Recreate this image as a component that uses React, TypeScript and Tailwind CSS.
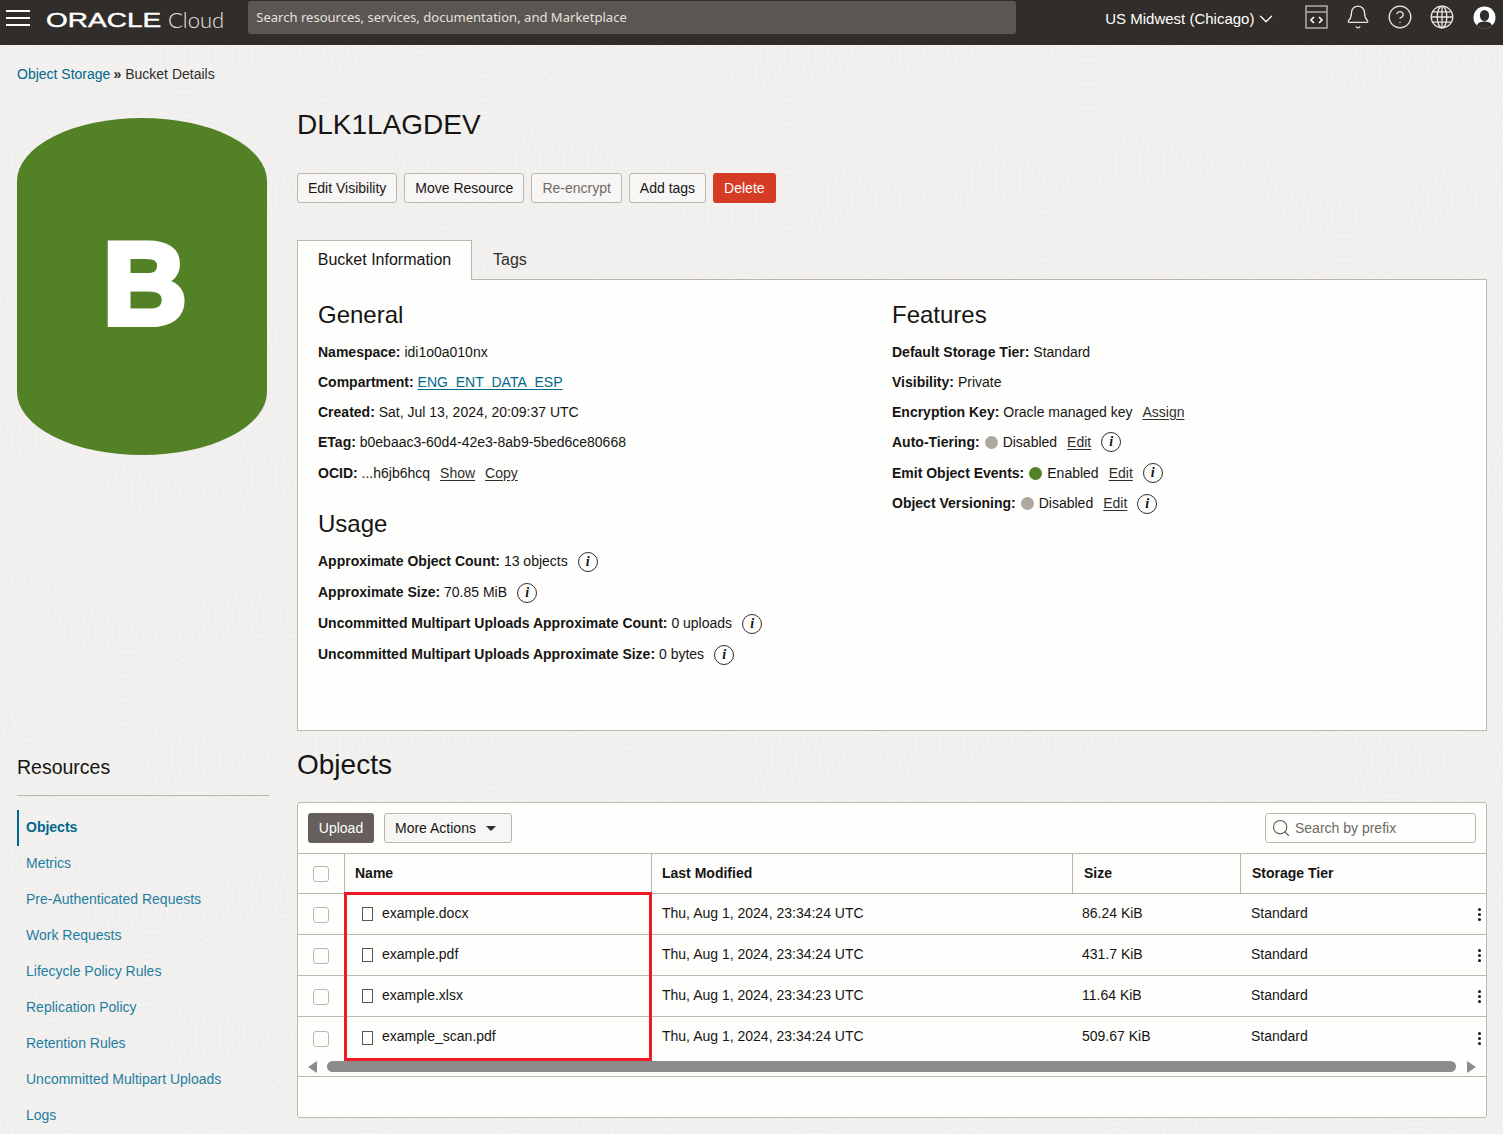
import React from "react";
import { Bell, ChevronDown, CircleHelp, Search } from "lucide-react";

const Info = () => (
  <span className="ml-[10px] inline-flex h-[20px] w-[20px] shrink-0 items-center justify-center rounded-full border-[1.5px] border-[#312d2a] font-['Liberation_Serif',serif] text-[14px] font-bold italic leading-none text-[#161513]">
    i
  </span>
);

const Dot = ({ green }: { green?: boolean }) => (
  <span className={green ? "mx-[5px] h-[13px] w-[13px] shrink-0 rounded-full bg-[#528225]" : "mx-[5px] h-[13px] w-[13px] shrink-0 rounded-full bg-[#aea8a3]"} />
);

const Row = ({ children, h, className }: { children: React.ReactNode; h?: boolean; className?: string }) => (
  <div className={(h ? "flex h-[31px] items-center whitespace-pre " : "flex h-[30px] items-center whitespace-pre ") + (className || "")}>{children}</div>
);

const Lnk = ({ children, className }: { children: React.ReactNode; className?: string }) => (
  <span className={"underline underline-offset-2 " + (className || "text-[#312d2a]")}>{children}</span>
);

const Btn = ({ children, muted }: { children: React.ReactNode; muted?: boolean }) => (
  <button className={muted ? "h-[30px] rounded-[3px] border border-[#bcb6b1] bg-[#f7f6f5] px-[10px] text-[14px] text-[#6f6964]" : "h-[30px] rounded-[3px] border border-[#bcb6b1] bg-[#f7f6f5] px-[10px] text-[14px] text-[#161513]"}>
    {children}
  </button>
);

const Check = () => <span className="block h-[16px] w-[16px] rounded-[3px] border border-[#bcb6b1] bg-[#fefefc]" />;

const FileIcon = () => <span className="block h-[14px] w-[11px] border-[1.5px] border-[#5b5652] bg-[#fefefc]" />;

const Kebab = () => (
  <span className="flex flex-col gap-[2px]">
    <span className="h-[3px] w-[3px] rounded-full bg-[#161513]" />
    <span className="h-[3px] w-[3px] rounded-full bg-[#161513]" />
    <span className="h-[3px] w-[3px] rounded-full bg-[#161513]" />
  </span>
);

const files = [
  ["example.docx", "Thu, Aug 1, 2024, 23:34:24 UTC", "86.24 KiB"],
  ["example.pdf", "Thu, Aug 1, 2024, 23:34:24 UTC", "431.7 KiB"],
  ["example.xlsx", "Thu, Aug 1, 2024, 23:34:23 UTC", "11.64 KiB"],
  ["example_scan.pdf", "Thu, Aug 1, 2024, 23:34:24 UTC", "509.67 KiB"],
];

const nav = ["Metrics", "Pre-Authenticated Requests", "Work Requests", "Lifecycle Policy Rules", "Replication Policy", "Retention Rules", "Uncommitted Multipart Uploads", "Logs"];

const swirls: number[][] = [];
for (let j = 0; j < 9; j++) {
  for (let i = 0; i < 11; i++) {
    swirls.push([i * 150 + ((j * 67) % 110) - 30, j * 140 + ((i * 53) % 70) + 20]);
  }
}
const radii = [124, 118, 112, 106, 100, 94, 88, 82, 76, 70, 64, 58, 52, 46, 40, 34, 28, 22, 16, 10, 4];

const Pattern = () => (
  <svg className="pointer-events-none absolute left-0 top-0 h-[1134px] w-[1503px]" viewBox="0 0 1503 1134">
    {swirls.map(([x, y], i) => (
      <g key={i} stroke="#efeeec" strokeWidth="1.6" fill="#f2f1ef">
        {radii.map((r) => (
          <circle key={r} cx={x} cy={y} r={r} />
        ))}
      </g>
    ))}
  </svg>
);

export default function App() {
  return (
    <div className="relative h-[1134px] w-[1503px] overflow-hidden bg-[#f2f1ef] font-['Liberation_Sans',Arial,sans-serif] text-[14px] text-[#161513]">
      <Pattern />
      <header className="relative flex h-[45px] items-start bg-[#312d2a] text-white">
        <div className="ml-[6px] mt-[10px] flex w-[24px] flex-col gap-[5px]">
          <span className="h-[2px] bg-white" />
          <span className="h-[2px] bg-white" />
          <span className="h-[2px] bg-white" />
        </div>
        <div className="ml-[16px] mt-[6px] flex h-[28px] w-[114px] items-center">
          <span className="inline-block origin-left scale-x-[1.4] text-[20px] font-normal leading-none [-webkit-text-stroke:0.4px_white]">ORACLE</span>
        </div>
        <span className="ml-[8px] mt-[6px] font-['Lato',sans-serif] text-[22px] font-light leading-[28px] text-[#e8e5e2]">Cloud</span>
        <div className="ml-[24px] mt-[1px] flex h-[33px] w-[768px] items-center rounded-[3px] bg-[#5b5652] px-[8px] pt-[1px] font-['Noto_Sans',sans-serif] text-[13.05px] text-[#e4e1de]">
          Search resources, services, documentation, and Marketplace
        </div>
        <div className="ml-[89px] mt-[8px] flex items-center text-[15px] leading-[18px]">
          US Midwest (Chicago)
          <ChevronDown className="ml-[1px] h-[22px] w-[22px]" strokeWidth={1.4} />
        </div>
        <div className="ml-[26px] mt-[4px] flex items-center gap-[16px] text-[#e8e5e2]">
          <span className="flex w-[26px] justify-center">
            <svg width="23" height="24" viewBox="0 0 23 24" fill="none" stroke="#a9a5a1" strokeWidth="1.6">
              <rect x="1" y="1" width="21" height="22" />
              <path d="M1 7h21" />
              <path d="M9 12l-3 3 3 3M14 12l3 3-3 3" stroke="#fff" />
            </svg>
          </span>
          <Bell className="h-[26px] w-[26px]" strokeWidth={1.2} />
          <CircleHelp className="h-[26px] w-[26px]" strokeWidth={1.2} />
          <svg width="26" height="26" viewBox="0 0 26 26" fill="none" stroke="currentColor" strokeWidth="1.3">
            <circle cx="13" cy="13" r="10.8" />
            <ellipse cx="13" cy="13" rx="4.8" ry="10.8" />
            <path d="M2.2 13h21.6M3.6 7.8h18.8M3.6 18.2h18.8M13 2.2v21.6" />
          </svg>
          <span className="flex w-[26px] justify-center">
            <svg width="23" height="23" viewBox="0 0 23 23">
              <circle cx="11.5" cy="11.5" r="11" fill="#fff" />
              <ellipse cx="11.5" cy="9.5" rx="4.6" ry="5.6" fill="#312d2a" />
              <path d="M3.8 19.5c1.5-3.2 4.5-4 7.7-4s6.2.8 7.7 4a11 11 0 0 1-15.4 0z" fill="#312d2a" />
            </svg>
          </span>
        </div>
      </header>

      <main className="relative px-[17px]">
        <div className="flex h-[57px] items-center pt-[2px] text-[14px]">
          <span className="text-[#00688c]">Object Storage</span>
          <span className="ml-[3px] mr-[4px] font-bold text-[#312d2a]">»</span>
          <span className="text-[#312d2a]">Bucket Details</span>
        </div>

        <div className="flex h-[629px] gap-[28px]">
          <div className="w-[252px] shrink-0 pt-[16px]">
            <div className="flex h-[337px] w-[250px] items-center justify-center rounded-[125px/63px] bg-[#528225] pb-[6px] pl-[6px] text-[116px] font-bold leading-none text-white [-webkit-text-stroke:6px_white]">
              B
            </div>
          </div>

          <div className="w-[1190px] shrink-0">
            <h1 className="h-[71px] pt-[5px] text-[28px] font-normal leading-[36px]">DLK1LAGDEV</h1>
            <div className="flex gap-[7px]">
              <Btn>Edit Visibility</Btn>
              <Btn>Move Resource</Btn>
              <Btn muted>Re-encrypt</Btn>
              <Btn>Add tags</Btn>
              <button className="h-[30px] rounded-[3px] bg-[#d63b25] px-[11px] text-[14px] text-white">Delete</button>
            </div>

            <div className="relative z-10 mt-[37px] flex h-[40px] items-center">
              <div className="flex h-[40px] w-[175px] items-center justify-center border border-b-0 border-[#bcb6b1] bg-[#fefefc] pb-[2px] text-[16px]">Bucket Information</div>
              <div className="ml-[21px] text-[16px] text-[#312d2a]">Tags</div>
            </div>
            <div className="-mt-px flex h-[452px] border border-[#bcb6b1] bg-[#fefefc]">
              <div className="w-[594px] shrink-0 pl-[20px] pt-[18px]">
                <h2 className="mb-[5px] text-[24px] font-normal leading-[34px]">General</h2>
                <Row><b>Namespace: </b>idi1o0a010nx</Row>
                <Row><b>Compartment: </b><Lnk className="text-[#00688c]">ENG_ENT_DATA_ESP</Lnk></Row>
                <Row><b>Created: </b>Sat, Jul 13, 2024, 20:09:37 UTC</Row>
                <Row><b>ETag: </b>b0ebaac3-60d4-42e3-8ab9-5bed6ce80668</Row>
                <Row h className="mt-[1px]"><b>OCID: </b>...h6jb6hcq<span className="w-[10px]" /><Lnk>Show</Lnk><span className="w-[10px]" /><Lnk>Copy</Lnk></Row>
                <h2 className="mb-[5px] mt-[18px] text-[24px] font-normal leading-[34px]">Usage</h2>
                <Row h><b>Approximate Object Count: </b>13 objects<Info /></Row>
                <Row h><b>Approximate Size: </b>70.85 MiB<Info /></Row>
                <Row h><b>Uncommitted Multipart Uploads Approximate Count: </b>0 uploads<Info /></Row>
                <Row h><b>Uncommitted Multipart Uploads Approximate Size: </b>0 bytes<Info /></Row>
              </div>
              <div className="pt-[18px]">
                <h2 className="mb-[5px] text-[24px] font-normal leading-[34px]">Features</h2>
                <Row><b>Default Storage Tier: </b>Standard</Row>
                <Row><b>Visibility: </b>Private</Row>
                <Row><b>Encryption Key: </b>Oracle managed key<span className="w-[10px]" /><Lnk>Assign</Lnk></Row>
                <Row><b>Auto-Tiering:</b><Dot />Disabled<span className="w-[10px]" /><Lnk>Edit</Lnk><Info /></Row>
                <Row h className="pt-[1px]"><b>Emit Object Events:</b><Dot green />Enabled<span className="w-[10px]" /><Lnk>Edit</Lnk><Info /></Row>
                <Row h><b>Object Versioning:</b><Dot />Disabled<span className="w-[10px]" /><Lnk>Edit</Lnk><Info /></Row>
              </div>
            </div>
          </div>
        </div>

        <div className="flex gap-[28px]">
          <div className="w-[252px] shrink-0">
            <h3 className="flex h-[65px] items-end border-b border-[#bcb6b1] pb-[16px] text-[19.5px] font-normal leading-[24px]">Resources</h3>
            <nav className="mt-[14px]">
              <div className="flex h-[36px] items-center border-l-2 border-[#00688c] pb-[2px] pl-[7px] font-bold text-[#00688c]">Objects</div>
              {nav.map((n) => (
                <div key={n} className="flex h-[36px] items-center pb-[2px] pl-[9px] text-[#1f7da0]">{n}</div>
              ))}
            </nav>
          </div>

          <div className="w-[1190px] shrink-0">
            <h2 className="flex h-[71px] items-start pt-[15px] text-[28px] font-normal leading-[38px]">Objects</h2>
            <div className="relative h-[316px] rounded-[3px] border border-[#bcb6b1] bg-[#fefefc]">
              <div className="flex h-[50px] items-center px-[10px]">
                <button className="h-[30px] w-[66px] rounded-[3px] bg-[#665f5b] text-[14px] text-white">Upload</button>
                <button className="ml-[10px] flex h-[30px] w-[128px] items-center rounded-[3px] border border-[#bcb6b1] bg-[#f7f6f5] pl-[10px] text-[14px]">
                  More Actions
                  <span className="ml-[10px] h-0 w-0 border-x-[5px] border-t-[5px] border-x-transparent border-t-[#312d2a]" />
                </button>
                <div className="ml-auto flex h-[30px] w-[211px] items-center rounded-[3px] border border-[#bcb6b1] bg-[#fefefc] pl-[5px] text-[#6f6964]">
                  <Search className="h-[20px] w-[20px] text-[#5b5652]" strokeWidth={1.3} />
                  <span className="ml-[4px]">Search by prefix</span>
                </div>
              </div>

              <div className="grid h-[41px] grid-cols-[46px_307px_421px_168px_1fr] items-stretch border-y border-[#bcb6b1] font-bold">
                <div className="flex items-center pl-[15px]"><Check /></div>
                <div className="flex items-center border-l border-[#bcb6b1] pl-[10px]">Name</div>
                <div className="flex items-center border-l border-[#bcb6b1] pl-[10px]">Last Modified</div>
                <div className="flex items-center border-l border-[#bcb6b1] pl-[11px]">Size</div>
                <div className="flex items-center border-l border-[#bcb6b1] pl-[11px]">Storage Tier</div>
              </div>
              {files.map(([name, date, size], i) => (
                <div key={name} className={i < 3 ? "grid h-[41px] grid-cols-[46px_307px_421px_168px_1fr] items-center border-b border-[#bcb6b1]" : "grid h-[41px] grid-cols-[46px_307px_421px_168px_1fr] items-center"}>
                  <div className="flex pl-[15px] pt-[2px]"><Check /></div>
                  <div className="flex items-center whitespace-pre pl-[18px]"><FileIcon /><span className="ml-[9px] -mt-[2px]">{name}</span></div>
                  <div className="-mt-[2px] pl-[11px]">{date}</div>
                  <div className="-mt-[2px] pl-[10px]">{size}</div>
                  <div className="flex items-center justify-between pl-[11px] pr-[5px]"><span className="-mt-[2px]">Standard</span><span className="pt-[1px]"><Kebab /></span></div>
                </div>
              ))}
              <div className="flex h-[19px] items-center border-b border-[#bcb6b1] pb-[1px] pl-[10px] pr-[9px]">
                <span className="h-0 w-0 border-y-[6px] border-r-[9px] border-y-transparent border-r-[#8c8c8c]" />
                <span className="ml-[10px] h-[11px] w-[1129px] rounded-full bg-[#8c8c8c]" />
                <span className="ml-[11px] h-0 w-0 border-y-[6px] border-l-[9px] border-y-transparent border-l-[#8c8c8c]" />
              </div>

              <div className="absolute left-[46px] top-[89px] h-[169px] w-[308px] border-[3px] border-[#ed1c24]" />
            </div>
          </div>
        </div>
      </main>
    </div>
  );
}
